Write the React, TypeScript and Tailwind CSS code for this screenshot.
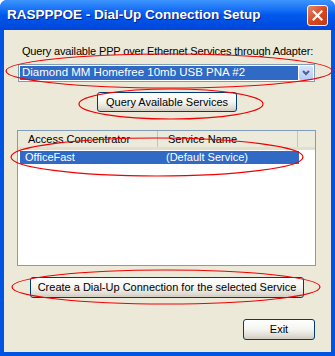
const ui = { fontFamily: '"Liberation Sans", Arial, sans-serif' };

const Button = ({ label, className }: { label: string; className: string }) => (
  <div
    className={`flex items-center justify-center whitespace-nowrap rounded-[3px] border border-[#003C74] bg-gradient-to-b from-white via-[#F4F4F0] to-[#D6D0C5] text-[11px] text-black shadow-[inset_0_-2px_0_#D6D0C5] ${className}`}
  >
    {label}
  </div>
);

const Ellipses = () => (
  <svg className="pointer-events-none absolute left-0 top-0" width="335" height="356">
    <g fill="none" stroke="#F00000" strokeWidth="1.2">
      <ellipse cx="169" cy="71" rx="163" ry="17" />
      <ellipse cx="171" cy="104" rx="92" ry="15" />
      <ellipse cx="157" cy="157" rx="146" ry="19" />
      <ellipse cx="166" cy="287" rx="154" ry="17" />
    </g>
  </svg>
);

export default function App() {
  return (
    <div className="relative h-[356px] w-[335px] overflow-hidden bg-white" style={ui}>
      <div className="flex h-full flex-col rounded-t-[7px] bg-[#0054E3]">
        {/* title bar */}
        <div className="flex h-[30px] items-center justify-between rounded-t-[7px] bg-gradient-to-b from-[#3D95FF] via-[#0058EE] to-[#0046D8] pl-[7px] pr-[7px]">
          <span className="whitespace-nowrap text-[13.5px] font-bold text-white [text-shadow:1px_1px_0_#0A1F8A]">
            RASPPPOE - Dial-Up Connection Setup
          </span>
          <div className="flex h-[21px] w-[21px] items-center justify-center rounded-[3px] border border-white bg-gradient-to-br from-[#E8866A] via-[#D9481F] to-[#C23A12]">
            <svg width="11" height="11" viewBox="0 0 11 11">
              <path d="M1.5 1.5 L9.5 9.5 M9.5 1.5 L1.5 9.5" stroke="white" strokeWidth="2.2" strokeLinecap="square" />
            </svg>
          </div>
        </div>

        {/* client area */}
        <div className="mx-[4px] mb-[4px] flex flex-1 flex-col bg-[#ECE9D8] text-[11px] text-black">
          <div className="mt-[14px] whitespace-nowrap text-center leading-[14px] tracking-[-0.15px]">
            Query available PPP over Ethernet Services through Adapter:
          </div>

          <div className="ml-[14px] mt-[6px] flex h-[18px] w-[297px] border border-[#7F9DB9] bg-white p-[1px]">
            <div className="flex flex-1 items-center whitespace-nowrap bg-[#316AC5] pl-[2px] text-[11.5px] text-white">
              Diamond MM Homefree 10mb USB PNA #2
            </div>
            <div className="ml-[1px] flex w-[14px] items-center justify-center rounded-[2px] bg-gradient-to-b from-[#D6E3FD] to-[#B4CAF8]">
              <svg width="8" height="6" viewBox="0 0 8 6">
                <path d="M1 1 L4 4 L7 1" fill="none" stroke="#4D6185" strokeWidth="2" />
              </svg>
            </div>
          </div>

          <Button label="Query Available Services" className="ml-[93px] mt-[10px] h-[20px] w-[140px]" />

          <div className="ml-[13px] mt-[18px] flex h-[136px] w-[299px] flex-col border border-[#7F9DB9] bg-white">
            <div className="flex h-[19px] items-end border-b-[3px] border-[#E2DECD] bg-[#EBEADB] text-[11px] text-black">
              <div className="flex h-full w-[140px] items-center whitespace-nowrap border-r border-[#C7C5B2] pl-[10px]">Access Concentrator</div>
              <div className="flex h-full w-[140px] items-center whitespace-nowrap border-r border-[#C7C5B2] pl-[10px]">Service Name</div>
              <div className="h-full flex-1" />
            </div>
            <div className="ml-[2px] mt-[1px] flex h-[13px] w-[279px] items-center whitespace-nowrap bg-[#316AC5] text-[11px] text-white">
              <div className="w-[139px] pl-[5px]">OfficeFast</div>
              <div className="pl-[7px]">(Default Service)</div>
            </div>
          </div>

          <Button label="Create a Dial-Up Connection for the selected Service" className="ml-[26px] mt-[11px] h-[21px] w-[274px]" />

          <Button label="Exit" className="ml-[239px] mt-[21px] h-[21px] w-[72px]" />
        </div>
      </div>
      <Ellipses />
    </div>
  );
}
